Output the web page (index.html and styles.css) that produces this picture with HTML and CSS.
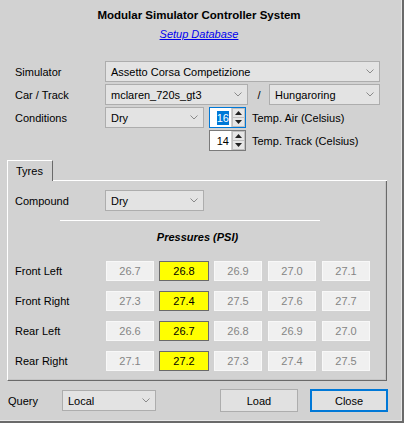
FILE: index.html
```html
<!DOCTYPE html>
<html>
<head>
<meta charset="utf-8">
<link rel="stylesheet" href="styles.css">
</head>
<body>
<div class="window">
  <header class="head">
    <div class="title">Modular Simulator Controller System</div>
    <a class="link" href="#">Setup Database</a>
  </header>

  <div class="form">
    <div class="row">
      <span class="lbl">Simulator</span>
      <div class="combo w-sim"><span>Assetto Corsa Competizione</span><svg class="chev" viewBox="0 0 8 5"><path d="M0.5 0.5 L4 4 L7.5 0.5"/></svg></div>
    </div>
    <div class="row">
      <span class="lbl">Car / Track</span>
      <div class="combo w-car"><span>mclaren_720s_gt3</span><svg class="chev" viewBox="0 0 8 5"><path d="M0.5 0.5 L4 4 L7.5 0.5"/></svg></div>
      <span class="slash">/</span>
      <div class="combo w-track"><span>Hungaroring</span><svg class="chev" viewBox="0 0 8 5"><path d="M0.5 0.5 L4 4 L7.5 0.5"/></svg></div>
    </div>
    <div class="row">
      <span class="lbl">Conditions</span>
      <div class="combo w-cond"><span>Dry</span><svg class="chev" viewBox="0 0 8 5"><path d="M0.5 0.5 L4 4 L7.5 0.5"/></svg></div>
      <div class="spin focus"><div class="spin-val"><span class="sel">16</span></div><div class="spin-btns"><div class="sb"><svg viewBox="0 0 7 4"><path d="M0 4 L3.5 0 L7 4Z"/></svg></div><div class="sb"><svg viewBox="0 0 7 4"><path d="M0 0 L3.5 4 L7 0Z"/></svg></div></div></div>
      <span class="unit">Temp. Air (Celsius)</span>
    </div>
    <div class="row">
      <span class="lbl"></span>
      <div class="spacer-cond"></div>
      <div class="spin"><div class="spin-val"><span>14</span></div><div class="spin-btns"><div class="sb"><svg viewBox="0 0 7 4"><path d="M0 4 L3.5 0 L7 4Z"/></svg></div><div class="sb"><svg viewBox="0 0 7 4"><path d="M0 0 L3.5 4 L7 0Z"/></svg></div></div></div>
      <span class="unit">Temp. Track (Celsius)</span>
    </div>
  </div>

  <div class="tabs">
    <div class="tabstrip"><div class="tab">Tyres</div><div class="tabline"></div></div>
    <div class="panel">
      <div class="row prow">
        <span class="lbl">Compound</span>
        <div class="combo w-cond"><span>Dry</span><svg class="chev" viewBox="0 0 8 5"><path d="M0.5 0.5 L4 4 L7.5 0.5"/></svg></div>
      </div>
      <div class="sep"></div>
      <div class="ptitle">Pressures (PSI)</div>
      <div class="grid">
        <div class="prow-p"><span class="lbl plbl">Front Left</span><div class="cells"><div class="cell">26.7</div><div class="cell on">26.8</div><div class="cell">26.9</div><div class="cell">27.0</div><div class="cell">27.1</div></div></div>
        <div class="prow-p"><span class="lbl plbl">Front Right</span><div class="cells"><div class="cell">27.3</div><div class="cell on">27.4</div><div class="cell">27.5</div><div class="cell">27.6</div><div class="cell">27.7</div></div></div>
        <div class="prow-p"><span class="lbl plbl">Rear Left</span><div class="cells"><div class="cell">26.6</div><div class="cell on">26.7</div><div class="cell">26.8</div><div class="cell">26.9</div><div class="cell">27.0</div></div></div>
        <div class="prow-p"><span class="lbl plbl">Rear Right</span><div class="cells"><div class="cell">27.1</div><div class="cell on">27.2</div><div class="cell">27.3</div><div class="cell">27.4</div><div class="cell">27.5</div></div></div>
      </div>
    </div>
  </div>

  <div class="footer">
    <span class="qlbl">Query</span>
    <div class="combo w-query"><span>Local</span><svg class="chev" viewBox="0 0 8 5"><path d="M0.5 0.5 L4 4 L7.5 0.5"/></svg></div>
    <div class="fill"></div>
    <button class="btn">Load</button>
    <button class="btn default">Close</button>
  </div>
</div>
</body>
</html>
```

FILE: styles.css
```css
* { box-sizing: border-box; }
html, body { margin: 0; padding: 0; }
body {
  background: #d2d2d2;
  font-family: "Liberation Sans", Arial, sans-serif;
  font-size: 11px;
  color: #000;
}
.window {
  width: 404px;
  height: 423px;
  background: #d2d2d2;
  border-right: 2px solid #6a6a6a;
  border-bottom: 2px solid #6a6a6a;
  box-shadow: inset -1px -1px 0 #e8e8e8;
  overflow: hidden;
}
.head {
  padding-top: 8px;
  text-align: center;
  padding-right: 4px;
}
.title {
  font-weight: bold;
  font-size: 11.5px;
  line-height: 14px;
}
.link {
  display: inline-block;
  margin-top: 5px;
  line-height: 14px;
  font-style: italic;
  color: #0000ee;
  text-decoration: underline;
}
.form {
  margin-top: 20px;
  padding-left: 15px;
  display: flex;
  flex-direction: column;
  gap: 2px;
}
.row {
  display: flex;
  align-items: center;
  height: 21px;
}
.lbl {
  width: 90px;
  flex: none;
}
.plbl { width: 91px; }
.combo {
  height: 21px;
  background: #e3e3e3;
  border: 1px solid #adadad;
  display: flex;
  align-items: center;
  justify-content: space-between;
  padding: 0 5px 0 5px;
  flex: none;
}
.chev {
  width: 8px;
  height: 5px;
  fill: none;
  stroke: #808080;
  stroke-width: 0.9;
}
.w-sim { width: 275px; }
.w-car { width: 143px; }
.w-track { width: 111px; }
.w-cond { width: 99px; }
.w-query { width: 94px; }
.slash {
  width: 21px;
  text-align: center;
  flex: none;
  padding-left: 1px;
}
.spacer-cond { width: 99px; flex: none; }
.spin {
  margin-left: 5px;
  width: 37px;
  height: 21px;
  display: flex;
  flex: none;
  background: #fff;
  border: 1px solid #7a7a7a;
}
.spin.focus { border-color: #0078d7; }
.spin-val {
  flex: 1;
  display: flex;
  align-items: center;
  justify-content: flex-end;
  padding-right: 2px;
}
.sel {
  background: #0078d7;
  color: #fff;
  padding: 1px 0;
}
.spin-btns {
  width: 14px;
  display: flex;
  flex-direction: column;
  border-left: 1px solid #d0d0d0;
}
.sb {
  flex: 1;
  background: #e6e6e6;
  border: 1px solid #c0c0c0;
  display: flex;
  align-items: center;
  justify-content: center;
}
.sb + .sb { border-top: none; }
.sb svg {
  width: 7px;
  height: 4px;
  fill: #222;
}
.unit {
  margin-left: 6px;
  white-space: nowrap;
}
.tabs {
  margin-top: 9px;
  margin-left: 7px;
  width: 380px;
}
.tabstrip {
  display: flex;
  align-items: flex-end;
  height: 21px;
}
.tab {
  width: 46px;
  height: 21px;
  border-top: 1px solid #fff;
  border-left: 1px solid #fff;
  border-right: 1px solid #6a6a6a;
  padding-left: 8px;
  line-height: 20px;
  position: relative;
  z-index: 1;
}
.tabline {
  flex: 1;
  border-bottom: 1px solid #fff;
}
.panel {
  height: 200px;
  border-left: 1px solid #fff;
  border-right: 1px solid #6a6a6a;
  border-bottom: 1px solid #6a6a6a;
  box-shadow: inset -1px -1px 0 #c4c4c4;
  padding: 9px 0 0 7px;
}
.prow { height: 21px; }
.sep {
  margin: 9px 0 0 45px;
  width: 260px;
  height: 1px;
  background: #fff;
}
.ptitle {
  margin-top: 9px;
  text-align: center;
  font-weight: bold;
  font-style: italic;
  line-height: 14px;
  padding-right: 6px;
}
.grid {
  margin-top: 17px;
  display: flex;
  flex-direction: column;
  gap: 10px;
}
.prow-p {
  display: flex;
  align-items: center;
  height: 20px;
}
.cells {
  display: flex;
  gap: 6px;
}
.cell {
  width: 48px;
  height: 20px;
  background: #f0f0f0;
  border: 1px solid #f8f8f8;
  color: #858585;
  text-align: center;
  line-height: 18px;
}
.cell.on {
  background: #ffff00;
  border-color: #6a6a6a;
  color: #000;
  width: 50px;
  margin: 0 -1px 0 -1px;
}
.footer {
  margin-top: 8px;
  padding-left: 8px;
  display: flex;
  align-items: center;
  height: 23px;
  width: 388px;
}
.qlbl { width: 54px; flex: none; }
.fill { flex: 1; }
.btn {
  font: inherit;
  width: 78px;
  height: 23px;
  background: #e1e1e1;
  border: 1px solid #adadad;
  color: #000;
  padding: 0;
  margin: 0;
}
.btn.default {
  margin-left: 12px;
  border: 2px solid #0078d7;
}
```
